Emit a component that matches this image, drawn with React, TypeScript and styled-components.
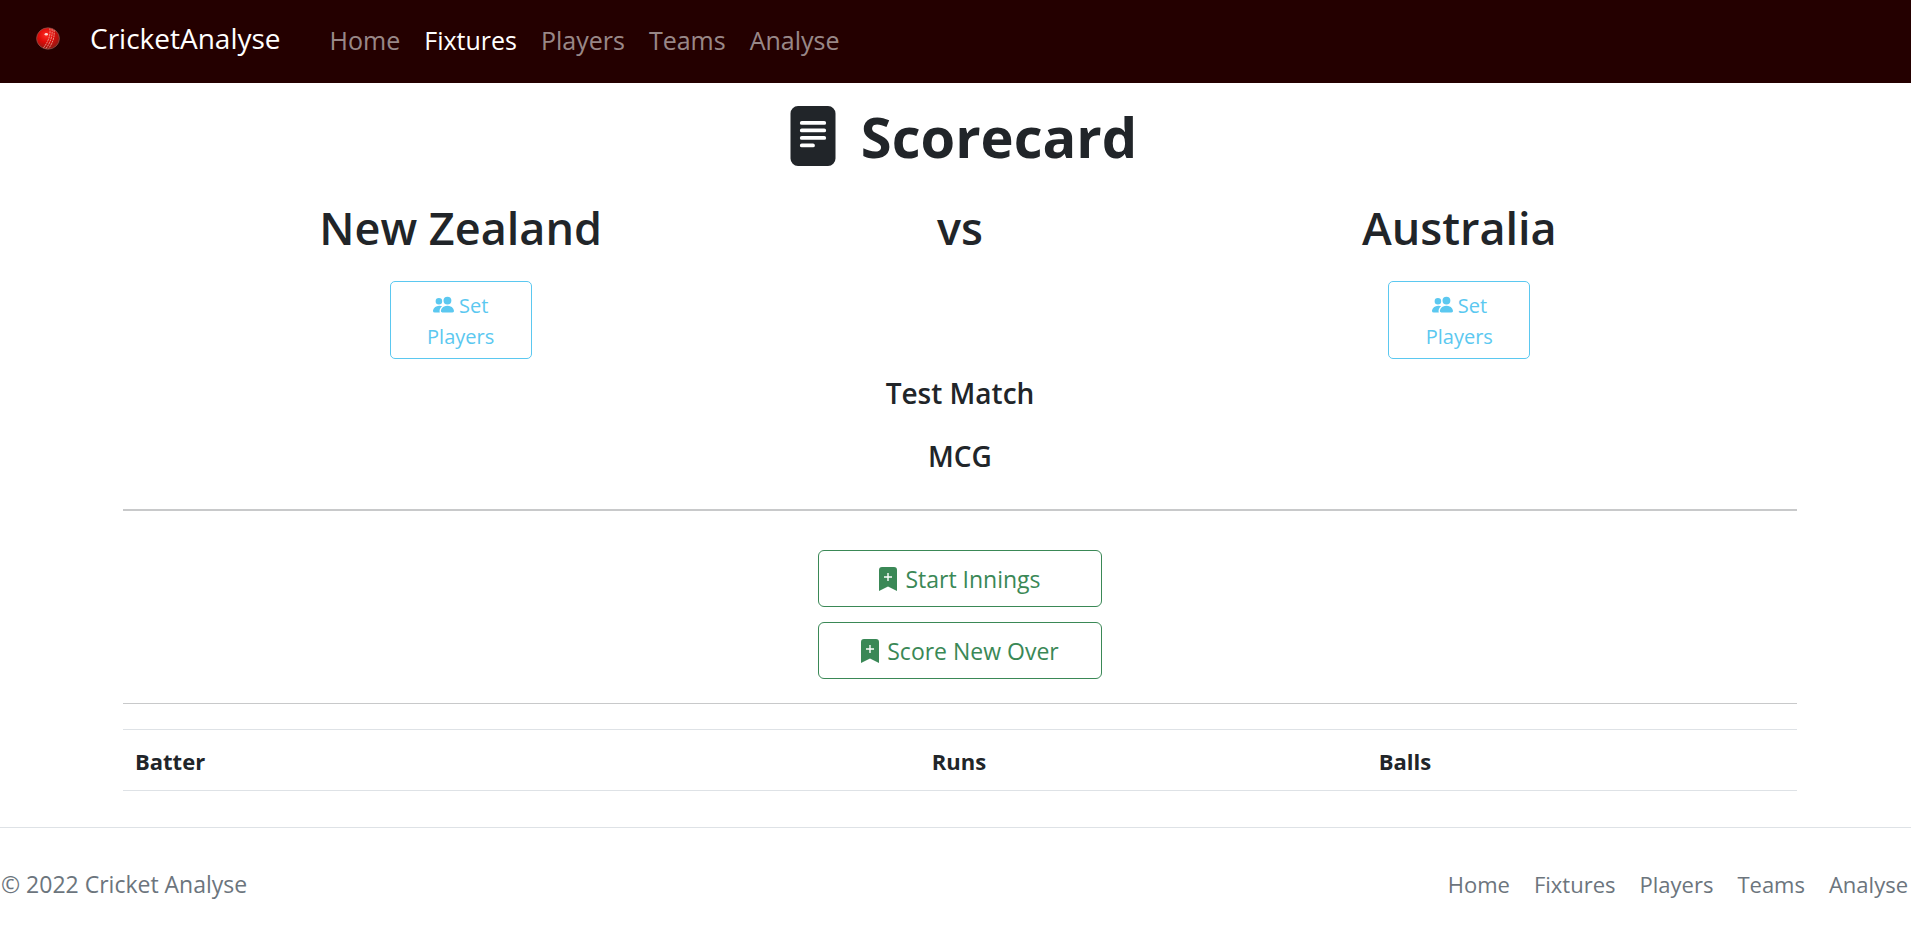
import React from "react";
import styled, { createGlobalStyle } from "styled-components";
import { BsFileTextFill, BsPeopleFill } from "react-icons/bs";

const GlobalStyle = createGlobalStyle`
  *, *::before, *::after { box-sizing: border-box; }
  body {
    margin: 0;
    background: #fff;
    color: #212529;
    font-family: "Segoe UI", "Open Sans", "Noto Sans", sans-serif;
    font-size: 22px;
    line-height: 36px;
  }
  h1, h2, h3, p, ul { margin: 0; padding: 0; }
  ul { list-style: none; }
  a { text-decoration: none; color: inherit; }
`;

const Navbar = styled.nav`
  display: flex;
  align-items: center;
  height: 83px;
  padding: 0 36px 8px;
  background: #240000;
`;

const Brand = styled.a`
  display: flex;
  align-items: center;
  gap: 30px;
  margin-right: 49px;
  color: #fff;
  font-size: 28px;

  svg {
    margin-top: 2px;
  }
`;

const NavList = styled.ul`
  display: flex;
  gap: 24px;
  padding-top: 4px;
  font-size: 25px;
`;

const NavLink = styled.a<{ $active?: boolean }>`
  color: ${(p) => (p.$active ? "#fff" : "rgba(255, 255, 255, 0.55)")};
`;

const Main = styled.main`
  padding: 23px 114px 36px 123px;
`;

const Title = styled.h1`
  display: flex;
  justify-content: center;
  align-items: center;
  gap: 18px;
  height: 60px;
  font-size: 56px;
  font-weight: 700;
  line-height: 60px;
`;

const Teams = styled.section`
  display: grid;
  grid-template-columns: repeat(3, 1fr);
  padding: 34px 88px 0;
`;

const Team = styled.div`
  display: flex;
  flex-direction: column;
  align-items: center;
  gap: 26px;
`;

const TeamName = styled.h2`
  font-size: 45px;
  font-weight: 600;
  line-height: 55px;
`;

const PlayersButton = styled.button`
  width: 142px;
  height: 78px;
  padding: 2px 24px 0;
  border: 1px solid #5bc8f0;
  border-radius: 5px;
  background: transparent;
  color: #5bc8f0;
  font: inherit;
  font-size: 20px;
  line-height: 31px;

  svg {
    vertical-align: -2px;
  }
`;

const Details = styled.section`
  display: flex;
  flex-direction: column;
  align-items: center;
  gap: 27px;
  padding: 16px 0 35px;
`;

const Detail = styled.h3`
  font-size: 28px;
  font-weight: 600;
  line-height: 36px;
`;

const Divider = styled.hr<{ $thick?: boolean }>`
  height: ${(p) => (p.$thick ? 2 : 1)}px;
  margin: 0;
  border: 0;
  background: #c8c9ca;
`;

const Actions = styled.section`
  display: flex;
  flex-direction: column;
  align-items: center;
  gap: 15px;
  padding: 39px 0 24px;
`;

const ActionButton = styled.button`
  display: flex;
  justify-content: center;
  align-items: center;
  gap: 8px;
  width: 284px;
  height: 57px;
  border: 1px solid #3a8856;
  border-radius: 6px;
  background: transparent;
  color: #3a8856;
  font: inherit;
  font-size: 23px;
`;

const ScoreTable = styled.table`
  width: 100%;
  margin-top: 25px;
  border-collapse: collapse;
  table-layout: fixed;
`;

const HeadCell = styled.th<{ $width: number }>`
  width: ${(p) => p.$width}%;
  height: 61px;
  padding: 2px 12px 0;
  border: solid #dee2e6;
  border-width: 1px 0;
  font-weight: 700;
  text-align: left;
`;

const Footer = styled.footer`
  display: flex;
  justify-content: space-between;
  align-items: center;
  padding: 38px 3px 37px 1px;
  border-top: 1px solid #dee2e6;
  color: #6c757d;
`;

const Copyright = styled.p`
  font-size: 23px;
`;

const FooterLinks = styled.ul`
  display: flex;
  gap: 24px;
`;

const BallLogo = () => (
  <svg width="24" height="23" viewBox="0 0 24 23" aria-hidden="true">
    <defs>
      <radialGradient id="leather" cx="0.42" cy="0.34" r="0.68">
        <stop offset="0" stopColor="#ff2d24" />
        <stop offset="0.5" stopColor="#dc0a08" />
        <stop offset="1" stopColor="#8c1a14" />
      </radialGradient>
    </defs>
    <ellipse cx="12" cy="11.5" rx="11.4" ry="10.7" fill="url(#leather)" stroke="#8f5a50" strokeWidth="0.7" />
    <g fill="none" stroke="#e9a090" strokeWidth="0.9" strokeDasharray="2 0.7">
      <path d="M13.8 1.5C15 8 12 15 7.5 20.8" />
      <path d="M16 2C17 9 14 16 10 21.5" />
      <path d="M18 3C19 10 16.5 16 12.8 21.3" />
    </g>
    <ellipse cx="10.3" cy="7.3" rx="1.7" ry="1.3" fill="#ffd9d4" />
  </svg>
);

const BookmarkPlus = () => (
  <svg width="18" height="24" viewBox="0 0 18 24" fill="currentColor" aria-hidden="true">
    <path
      fillRule="evenodd"
      d="M3 0h12a3 3 0 0 1 3 3v21l-9-4.4L0 24V3a3 3 0 0 1 3-3zM9.700 6H8.300v3.300H5v1.400h3.300V14h1.400v-3.300H13V9.300H9.700z"
    />
  </svg>
);

const pages = ["Home", "Fixtures", "Players", "Teams", "Analyse"];

const TeamColumn = ({ name }: { name: string }) => (
  <Team>
    <TeamName>{name}</TeamName>
    <PlayersButton type="button">
      <BsPeopleFill size={21} aria-hidden="true" /> Set Players
    </PlayersButton>
  </Team>
);

export default function App() {
  return (
    <>
      <GlobalStyle />
      <Navbar>
        <Brand href="#">
          <BallLogo />
          CricketAnalyse
        </Brand>
        <NavList>
          {pages.map((page) => (
            <li key={page}>
              <NavLink href="#" $active={page === "Fixtures"}>
                {page}
              </NavLink>
            </li>
          ))}
        </NavList>
      </Navbar>
      <Main>
        <Title>
          <BsFileTextFill size={60} aria-hidden="true" />
          Scorecard
        </Title>
        <Teams>
          <TeamColumn name="New Zealand" />
          <Team>
            <TeamName>vs</TeamName>
          </Team>
          <TeamColumn name="Australia" />
        </Teams>
        <Details>
          <Detail>Test Match</Detail>
          <Detail>MCG</Detail>
        </Details>
        <Divider $thick />
        <Actions>
          <ActionButton type="button">
            <BookmarkPlus />
            Start Innings
          </ActionButton>
          <ActionButton type="button">
            <BookmarkPlus />
            Score New Over
          </ActionButton>
        </Actions>
        <Divider />
        <ScoreTable>
          <thead>
            <tr>
              <HeadCell scope="col" $width={47.6}>Batter</HeadCell>
              <HeadCell scope="col" $width={26.7}>Runs</HeadCell>
              <HeadCell scope="col" $width={25.7}>Balls</HeadCell>
            </tr>
          </thead>
        </ScoreTable>
      </Main>
      <Footer>
        <Copyright>© 2022 Cricket Analyse</Copyright>
        <FooterLinks>
          {pages.map((page) => (
            <li key={page}>
              <a href="#">{page}</a>
            </li>
          ))}
        </FooterLinks>
      </Footer>
    </>
  );
}
